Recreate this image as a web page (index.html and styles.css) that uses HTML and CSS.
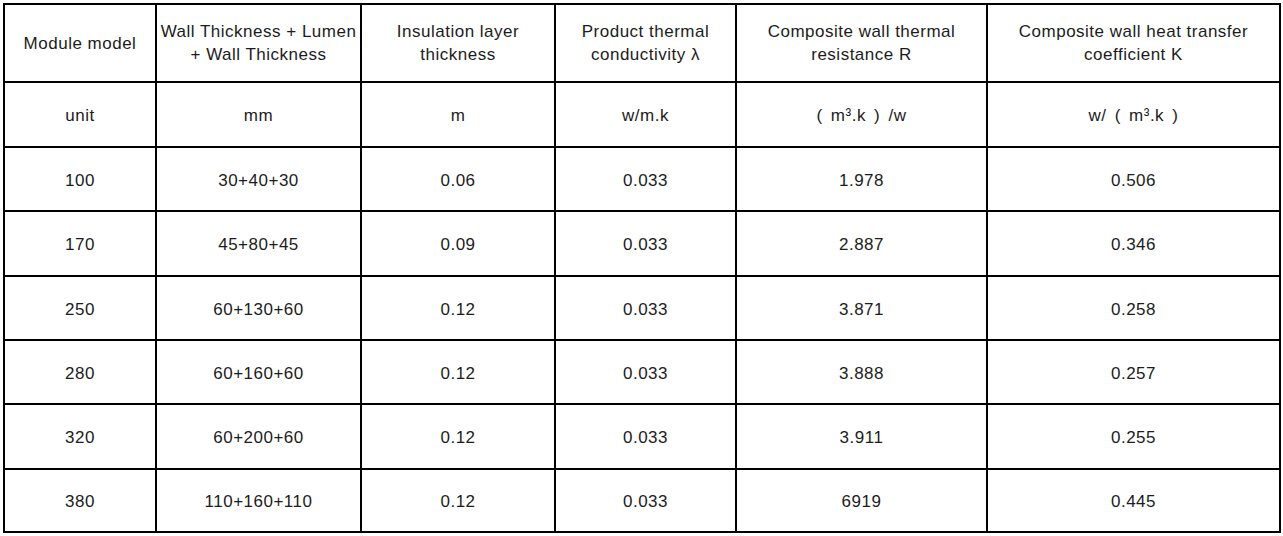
FILE: index.html
```html
<!DOCTYPE html>
<html>
<head>
<meta charset="utf-8">
<link rel="stylesheet" href="styles.css">
</head>
<body>
<table class="spec">
  <colgroup>
    <col class="c1"><col class="c2"><col class="c3"><col class="c4"><col class="c5"><col class="c6">
  </colgroup>
  <tr class="r-head">
    <td>Module model</td>
    <td>Wall Thickness + Lumen<br>+ Wall Thickness</td>
    <td>Insulation layer<br>thickness</td>
    <td>Product thermal<br>conductivity λ</td>
    <td>Composite wall thermal<br>resistance R</td>
    <td>Composite wall heat transfer<br>coefficient K</td>
  </tr>
  <tr class="r-a">
    <td>unit</td><td>mm</td><td>m</td><td>w/m.k</td><td class="unit">( m³.k ) /w</td><td class="unit">w/ ( m³.k )</td>
  </tr>
  <tr class="r-b">
    <td>100</td><td>30+40+30</td><td>0.06</td><td>0.033</td><td>1.978</td><td>0.506</td>
  </tr>
  <tr class="r-a">
    <td>170</td><td>45+80+45</td><td>0.09</td><td>0.033</td><td>2.887</td><td>0.346</td>
  </tr>
  <tr class="r-b">
    <td>250</td><td>60+130+60</td><td>0.12</td><td>0.033</td><td>3.871</td><td>0.258</td>
  </tr>
  <tr class="r-b">
    <td>280</td><td>60+160+60</td><td>0.12</td><td>0.033</td><td>3.888</td><td>0.257</td>
  </tr>
  <tr class="r-a">
    <td>320</td><td>60+200+60</td><td>0.12</td><td>0.033</td><td>3.911</td><td>0.255</td>
  </tr>
  <tr class="r-c">
    <td>380</td><td>110+160+110</td><td>0.12</td><td>0.033</td><td>6919</td><td>0.445</td>
  </tr>
</table>
</body>
</html>
```
FILE: styles.css
```css
html, body {
  margin: 0;
  background: #fff;
}
body {
  padding: 3px 0 0 3px;
  font-family: "Liberation Sans", Arial, sans-serif;
  font-size: 17px;
  letter-spacing: 0.5px;
  color: #1c1c1c;
}
.spec {
  border-collapse: separate;
  border-spacing: 2px;
  background: #000;
  table-layout: fixed;
  width: 1278px;
}
.spec td {
  background: #fff;
  text-align: center;
  vertical-align: middle;
  padding: 2px 0 0;
  line-height: 23px;
  white-space: nowrap;
}
.spec .r-head td {
  padding: 0;
  height: 76px;
}
.spec td.unit {
  word-spacing: 3px;
}
.c1 { width: 150px; }
.c2 { width: 203px; }
.c3 { width: 192px; }
.c4 { width: 179px; }
.c5 { width: 249px; }
.c6 { width: 291px; }
.r-a td { height: 61px; }
.r-b td { height: 60px; }
.r-c td { height: 59px; }
```
